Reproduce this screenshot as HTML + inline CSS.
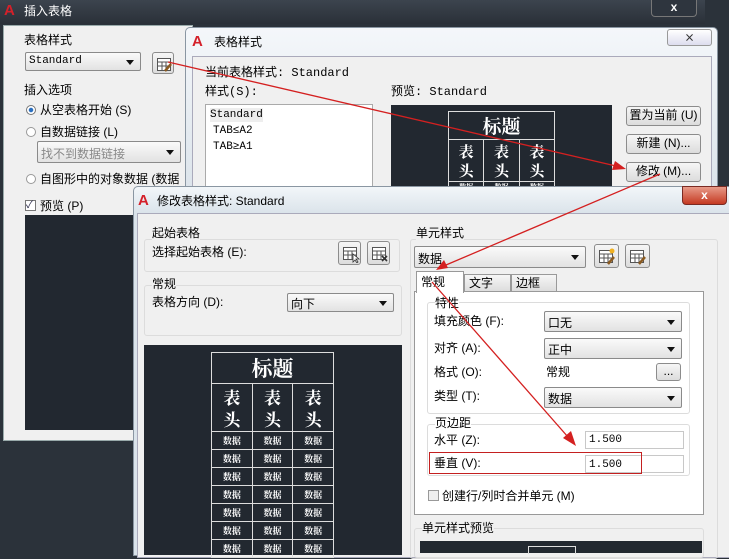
<!DOCTYPE html>
<html><head><meta charset="utf-8"><style>
*{margin:0;padding:0;box-sizing:border-box}
body{width:729px;height:552px;overflow:hidden;background:#2b323a;position:relative;font-family:"Liberation Sans","Noto Sans CJK SC",sans-serif;font-size:12px;color:#000}
.a{position:absolute}
.t{position:absolute;white-space:nowrap;font-size:12px;line-height:14px}
.m{font-family:"Liberation Mono","Noto Sans CJK SC",monospace;font-size:11px}
.dd{position:absolute;background:linear-gradient(#fafafa,#e2e2e2);border:1px solid #8a8a8a;border-radius:2px}
.dd:after{content:"";position:absolute;right:6px;top:50%;margin-top:-2px;border:4px solid transparent;border-top:5px solid #111;border-bottom:0}
.btn{position:absolute;background:linear-gradient(#f6f6f6,#dcdcdc);border:1px solid #8c8c8c;border-radius:3px;font-size:12px;text-align:center;line-height:17px}
.btn svg{position:absolute;left:3px;top:3px}
.grp{position:absolute;border:1px solid #dcdcdc;border-radius:3px}
.inp{position:absolute;background:#fff;border:1px solid #c8c8c8}
.dk{position:absolute;background:#222830}
.logo{position:absolute;color:#d4202a;font-weight:bold;font-size:15px;font-family:"Liberation Sans",sans-serif}
table.pv{position:absolute;border-collapse:collapse;color:#fff}
table.pv td{border:1px solid #ddd;text-align:center;font-family:"Noto Serif CJK SC",serif;font-weight:bold}
</style></head><body>
<svg width="0" height="0" style="position:absolute"><defs>
<g id="tb"><rect x="1.5" y="2.5" width="13" height="12" fill="#fff" stroke="#555"/><line x1="1.5" y1="6" x2="14.5" y2="6" stroke="#555"/><line x1="1.5" y1="10" x2="14.5" y2="10" stroke="#555"/><line x1="6" y1="6" x2="6" y2="14.5" stroke="#555"/><line x1="10" y1="6" x2="10" y2="14.5" stroke="#555"/></g>
</defs></svg>
<!-- dialog 1 -->
<div class="a" style="left:0;top:0;width:705px;height:24px;background:linear-gradient(#3c444e,#2a3038)"></div>
<div class="logo" style="left:4px;top:2px">A</div>
<div class="t" style="left:24px;top:4px;color:#fff">插入表格</div>
<div class="a" style="left:651px;top:0;width:46px;height:17px;border:1px solid #777;border-top:0;border-radius:0 0 4px 4px;background:#2e353e;color:#fff;text-align:center;font-weight:bold;line-height:14px">x</div>
<div class="a" style="left:3px;top:25px;width:190px;height:416px;background:#f0f0f0;border:1px solid #9aa"></div>
<div class="t" style="left:24px;top:33px">表格样式</div>
<div class="dd m" style="left:25px;top:52px;width:116px;height:19px;padding:2px 3px">Standard</div>
<div class="btn" style="left:152px;top:52px;width:22px;height:22px"><svg width="16" height="16"><use href="#tb"/><path d="M9 15 L15 8" stroke="#8a5a20" stroke-width="2.5"/></svg></div>
<div class="t" style="left:24px;top:83px">插入选项</div>
<div class="a" style="left:26px;top:105px;width:10px;height:10px;border-radius:50%;border:1px solid #777;background:radial-gradient(#2a6fc0 35%,#fff 45%)"></div>
<div class="t" style="left:40px;top:103px">从空表格开始 (S)</div>
<div class="a" style="left:26px;top:127px;width:10px;height:10px;border-radius:50%;border:1px solid #999;background:#fff"></div>
<div class="t" style="left:40px;top:125px">自数据链接 (L)</div>
<div class="dd" style="left:37px;top:141px;width:144px;height:22px;color:#888;padding:3px"><span>找不到数据链接</span></div>
<div class="a" style="left:26px;top:174px;width:10px;height:10px;border-radius:50%;border:1px solid #999;background:#fff"></div>
<div class="t" style="left:40px;top:172px">自图形中的对象数据 (数据</div>
<div class="a" style="left:25px;top:200px;width:11px;height:11px;border:1px solid #777;background:#fff;font-size:10px;line-height:9px;color:#224">✓</div>
<div class="t" style="left:40px;top:199px">预览 (P)</div>
<div class="dk" style="left:25px;top:215px;width:110px;height:215px"></div>
<!-- dialog 2 -->
<div class="a" style="left:185px;top:27px;width:533px;height:170px;background:linear-gradient(#f4f7fa,#dbe3ea);border:1px solid #8a96a2;border-radius:5px 5px 0 0"></div>
<div class="logo" style="left:192px;top:33px">A</div>
<div class="t" style="left:214px;top:35px">表格样式</div>
<div class="a" style="left:667px;top:29px;width:45px;height:17px;border:1px solid #999;border-radius:3px;background:linear-gradient(#fff,#dde);text-align:center;font-size:12px;line-height:15px;color:#333">⨯</div>
<div class="a" style="left:192px;top:56px;width:520px;height:140px;background:#f0f0f0;border:1px solid #aab"></div>
<div class="t m" style="left:205px;top:66px;font-size:12px">当前表格样式: Standard</div>
<div class="t m" style="left:205px;top:85px;font-size:12px">样式(S):</div>
<div class="a" style="left:205px;top:104px;width:168px;height:90px;background:#fff;border:1px solid #aaa"></div>
<div class="t m" style="left:210px;top:108px;background:#eee">Standard</div>
<div class="t m" style="left:213px;top:124px">TAB≤A2</div>
<div class="t m" style="left:213px;top:140px">TAB≥A1</div>
<div class="t m" style="left:391px;top:85px;font-size:12px">预览: Standard</div>
<div class="dk" style="left:391px;top:105px;width:221px;height:90px"></div>
<table class="pv" style="left:448px;top:111px;width:107px"><tr><td colspan="3" style="height:26px;font-size:19px">标题</td></tr><tr><td style="height:42px;font-size:15px;line-height:19px">表<br>头</td><td style="font-size:15px;line-height:19px">表<br>头</td><td style="font-size:15px;line-height:19px">表<br>头</td></tr><tr><td style="font-size:7px">数据</td><td style="font-size:7px">数据</td><td style="font-size:7px">数据</td></tr></table>
<div class="btn" style="left:626px;top:106px;width:75px;height:20px">置为当前 (U)</div>
<div class="btn" style="left:626px;top:134px;width:75px;height:20px">新建 (N)...</div>
<div class="btn" style="left:626px;top:162px;width:75px;height:20px">修改 (M)...</div>
<!-- dialog 3 -->
<div class="a" style="left:133px;top:186px;width:600px;height:370px;background:linear-gradient(#f2f6f9 0,#dae3ea 27px,#dae3ea 100%);border:1px solid #8a96a2;border-radius:5px 5px 0 0"></div>
<div class="logo" style="left:138px;top:192px">A</div>
<div class="t" style="left:157px;top:194px">修改表格样式: Standard</div>
<div class="a" style="left:682px;top:186px;width:45px;height:19px;border:1px solid #7a2a22;border-radius:0 0 4px 4px;background:linear-gradient(#e89a88,#c43a22);color:#fff;text-align:center;font-weight:bold;line-height:16px">x</div>
<div class="a" style="left:137px;top:213px;width:600px;height:345px;background:#f0f0f0;border:1px solid #aab"></div>
<div class="grp" style="left:144px;top:239px;width:256px;height:33px"></div>
<div class="t" style="left:152px;top:226px;background:#f0f0f0">起始表格</div>
<div class="t" style="left:152px;top:245px">选择起始表格 (E):</div>
<div class="btn" style="left:338px;top:241px;width:23px;height:24px"><svg width="18" height="18"><use href="#tb"/><path d="M11 9 L11 17 L13 15 L15 18 L16 17 L14 14 L17 14 Z" fill="#fff" stroke="#333" stroke-width=".8"/></svg></div>
<div class="btn" style="left:367px;top:241px;width:23px;height:24px"><svg width="18" height="18"><use href="#tb"/><path d="M11 11 L16 16 M16 11 L11 16" stroke="#333" stroke-width="1.6"/></svg></div>
<div class="grp" style="left:144px;top:285px;width:258px;height:51px"></div>
<div class="t" style="left:152px;top:277px;background:#f0f0f0">常规</div>
<div class="t" style="left:152px;top:295px">表格方向 (D):</div>
<div class="dd" style="left:287px;top:293px;width:107px;height:19px;padding:1px 3px">向下</div>
<div class="dk" style="left:144px;top:345px;width:258px;height:210px"></div>
<table class="pv" style="left:211px;top:352px;width:123px">
<tr><td colspan="3" style="height:29px;font-size:21px">标题</td></tr>
<tr><td style="height:48px;font-size:17px;line-height:22px">表<br>头</td><td style="font-size:17px;line-height:22px">表<br>头</td><td style="font-size:17px;line-height:22px">表<br>头</td></tr>
<tr><td style="height:18px;font-size:9px">数据</td><td style="font-size:9px">数据</td><td style="font-size:9px">数据</td></tr>
<tr><td style="height:18px;font-size:9px">数据</td><td style="font-size:9px">数据</td><td style="font-size:9px">数据</td></tr>
<tr><td style="height:18px;font-size:9px">数据</td><td style="font-size:9px">数据</td><td style="font-size:9px">数据</td></tr>
<tr><td style="height:18px;font-size:9px">数据</td><td style="font-size:9px">数据</td><td style="font-size:9px">数据</td></tr>
<tr><td style="height:18px;font-size:9px">数据</td><td style="font-size:9px">数据</td><td style="font-size:9px">数据</td></tr>
<tr><td style="height:18px;font-size:9px">数据</td><td style="font-size:9px">数据</td><td style="font-size:9px">数据</td></tr>
<tr><td style="height:18px;font-size:9px">数据</td><td style="font-size:9px">数据</td><td style="font-size:9px">数据</td></tr>
</table>
<div class="grp" style="left:410px;top:239px;width:308px;height:320px"></div>
<div class="t" style="left:416px;top:226px;background:#f0f0f0">单元样式</div>
<div class="dd" style="left:414px;top:246px;width:172px;height:22px;padding:3px 3px">数据</div>
<div class="btn" style="left:594px;top:244px;width:25px;height:24px"><svg width="18" height="18"><use href="#tb"/><path d="M10 16 L16 9" stroke="#8a5a20" stroke-width="2.5"/><circle cx="14" cy="3" r="2.5" fill="#f0b020"/></svg></div>
<div class="btn" style="left:625px;top:244px;width:25px;height:24px"><svg width="18" height="18"><use href="#tb"/><path d="M10 16 L16 9" stroke="#8a5a20" stroke-width="2.5"/></svg></div>
<div class="a" style="left:414px;top:291px;width:290px;height:224px;background:#fff;border:1px solid #999"></div>
<div class="a" style="left:464px;top:274px;width:47px;height:18px;background:linear-gradient(#f6f6f6,#ddd);border:1px solid #999;padding-left:4px;line-height:16px">文字</div>
<div class="a" style="left:511px;top:274px;width:46px;height:18px;background:linear-gradient(#f6f6f6,#ddd);border:1px solid #999;padding-left:4px;line-height:16px">边框</div>
<div class="a" style="left:416px;top:271px;width:48px;height:22px;background:#fff;border:1px solid #999;border-bottom:0;padding-left:4px;line-height:20px">常规</div>
<div class="grp" style="left:427px;top:302px;width:263px;height:112px"></div>
<div class="t" style="left:435px;top:296px;background:#fff">特性</div>
<div class="t" style="left:434px;top:314px">填充颜色 (F):</div>
<div class="dd" style="left:544px;top:311px;width:138px;height:21px;padding:2px 3px">口无</div>
<div class="t" style="left:434px;top:341px">对齐 (A):</div>
<div class="dd" style="left:544px;top:338px;width:138px;height:21px;padding:2px 3px">正中</div>
<div class="t" style="left:434px;top:365px">格式 (O):</div>
<div class="t" style="left:546px;top:365px">常规</div>
<div class="btn" style="left:656px;top:363px;width:25px;height:18px;line-height:14px">...</div>
<div class="t" style="left:434px;top:389px">类型 (T):</div>
<div class="dd" style="left:544px;top:387px;width:138px;height:21px;padding:2px 3px">数据</div>
<div class="grp" style="left:427px;top:424px;width:263px;height:52px"></div>
<div class="t" style="left:435px;top:416px;background:#fff">页边距</div>
<div class="t" style="left:434px;top:433px">水平 (Z):</div>
<div class="inp m" style="left:585px;top:431px;width:99px;height:18px;padding:2px 3px">1.500</div>
<div class="t" style="left:434px;top:456px">垂直 (V):</div>
<div class="inp m" style="left:585px;top:455px;width:99px;height:18px;padding:3px 3px">1.500</div>
<div class="a" style="left:429px;top:452px;width:213px;height:22px;border:1.5px solid #c42020"></div>
<div class="a" style="left:428px;top:490px;width:11px;height:11px;border:1px solid #999;background:#eee"></div>
<div class="t" style="left:442px;top:489px">创建行/列时合并单元 (M)</div>
<div class="grp" style="left:414px;top:528px;width:290px;height:30px"></div>
<div class="t" style="left:422px;top:521px;background:#f0f0f0">单元样式预览</div>
<div class="dk" style="left:420px;top:541px;width:282px;height:12px"></div>
<div class="a" style="left:528px;top:546px;width:48px;height:8px;border:1px solid #ddd;border-bottom:0"></div>
<!-- arrows -->
<svg class="a" style="left:0;top:0" width="729" height="552">
<g stroke="#d42020" stroke-width="1.3" fill="#d42020">
<line x1="168" y1="62" x2="616" y2="166"/><polygon points="626,169 612,170 615,161" stroke="none"/>
<line x1="660" y1="174" x2="446" y2="265"/><polygon points="436,270 444,260 448,268" stroke="none"/>
<line x1="432" y1="282" x2="568" y2="437"/><polygon points="576,446 563,438 571,431" stroke="none"/>
</g></svg>
</body></html>
